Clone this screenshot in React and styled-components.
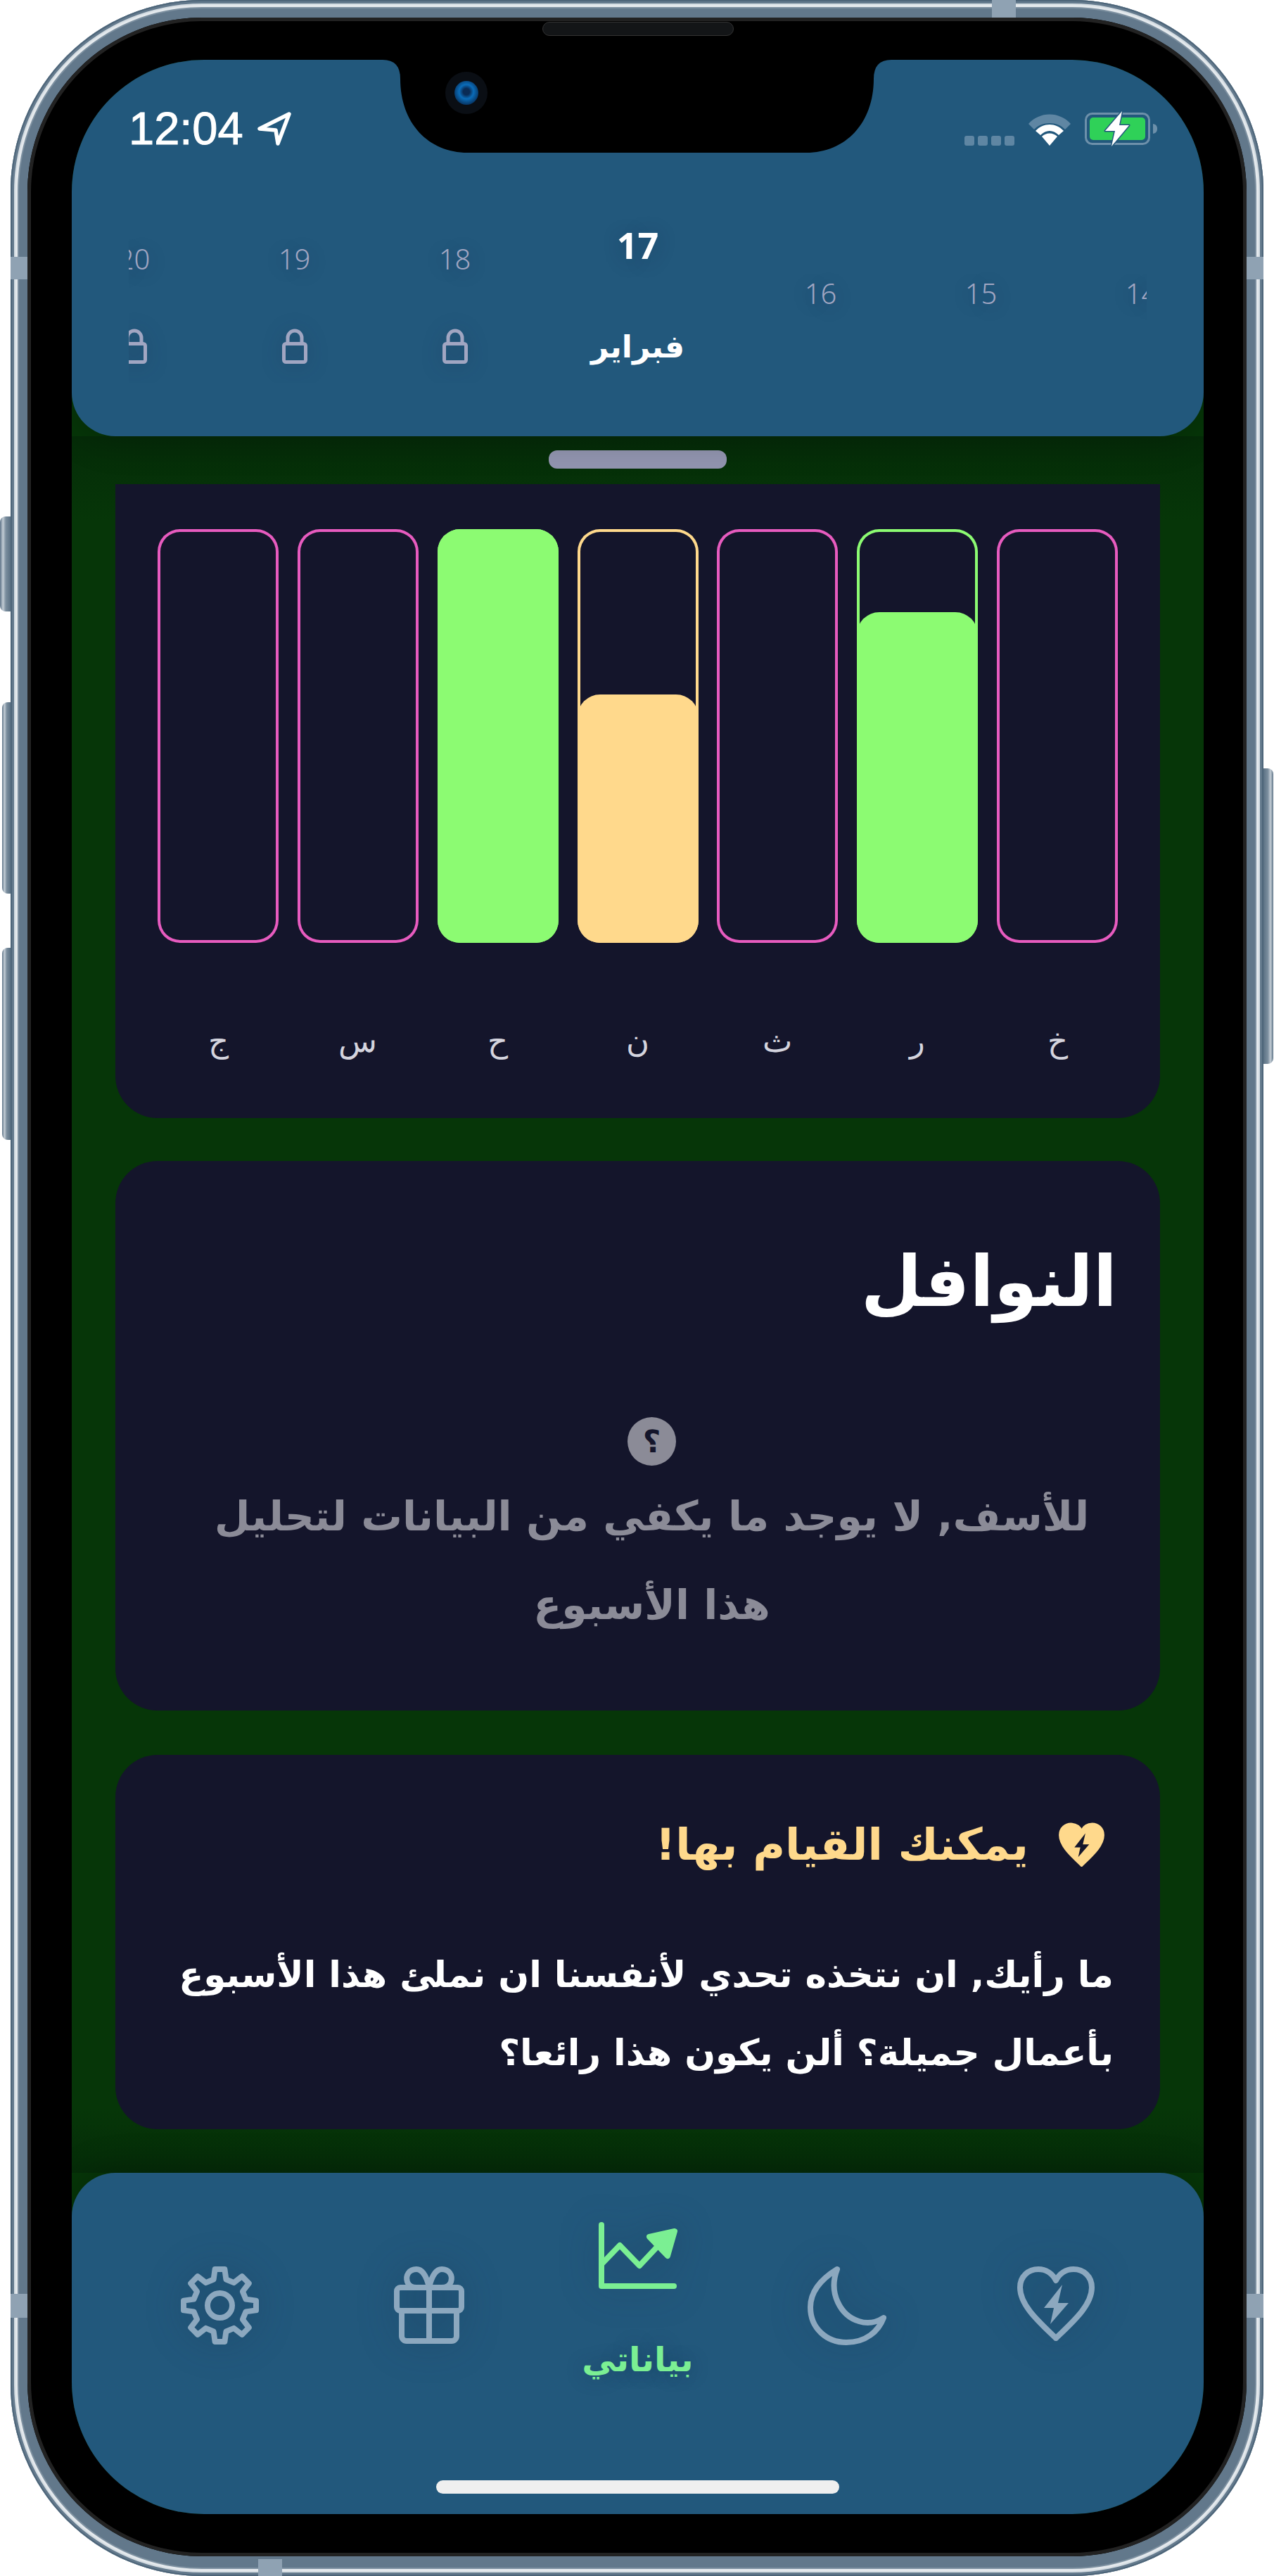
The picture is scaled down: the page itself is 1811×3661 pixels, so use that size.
import React from "react";
import styled, { createGlobalStyle } from "styled-components";

const AR = `"DejaVu Sans", "Noto Sans", sans-serif`;

const Global = createGlobalStyle`
  html, body { margin: 0; padding: 0; background: #fff; }
  #root { width: 1811px; height: 3661px; overflow: hidden; }
  * { box-sizing: border-box; }
`;

const Page = styled.div`
  width: 1811px;
  height: 3661px;
  padding: 0 15px;
  background: #fff;
`;

const Shell = styled.div`
  position: relative;
  width: 1781px;
  height: 3661px;
  border-radius: 272px;
  padding: 25px 24px 28px;
  background: #62788b;
  box-shadow:
    inset 0 0 0 2px #4d6579,
    inset 0 0 0 5px #647a8d,
    inset 0 0 0 7px #d4dce2,
    inset 0 0 0 10px #e4e9ed,
    inset 0 0 0 12px #7d90a0;
`;

const SideButton = styled.div`
  position: absolute;
  top: ${(p) => p.$top}px;
  height: ${(p) => p.$h}px;
  width: ${(p) => p.$w}px;
  ${(p) => (p.$right ? `right: -${p.$w}px;` : `left: -${p.$w}px;`)}
  border-radius: ${(p) => (p.$right ? "0 8px 8px 0" : "8px 0 0 8px")};
  background: linear-gradient(${(p) => (p.$right ? "270deg" : "90deg")}, #5c7286 0, #c3cdd5 28%, #7b8e9e 55%, #5b7184 100%);
`;

const Band = styled.div`
  position: absolute;
  background: #8fa2b3;
  ${(p) => p.$css}
`;

const Bezel = styled.div`
  position: relative;
  width: 100%;
  height: 100%;
  border-radius: 248px;
  background: #000;
  padding: 60px 61px 60px 63px;
  box-shadow: inset 0 0 0 5px #222;
`;

const Speaker = styled.div`
  position: absolute;
  top: 6px;
  left: 732px;
  width: 272px;
  height: 20px;
  border-radius: 10px;
  background: #131517;
  border: 1px solid #333;
`;

const Screen = styled.div`
  position: relative;
  height: 100%;
  width: 100%;
  border-radius: 188px;
  overflow: hidden;
  background: #063608;
  display: flex;
  flex-direction: column;
`;

const NotchShape = styled.svg`
  position: absolute;
  left: 442px;
  top: 0;
  z-index: 3;
`;

const Camera = styled.div`
  position: absolute;
  left: 531px;
  top: 17px;
  z-index: 4;
  width: 60px;
  height: 60px;
  border-radius: 50%;
  background: #0a0e14;
  display: flex;
  align-items: center;
  justify-content: center;
`;

const Lens = styled.div`
  width: 34px;
  height: 34px;
  border-radius: 50%;
  background: radial-gradient(circle at 50% 45%, #0a2b55 0 18%, #0b6cb8 40%, #07325f 75%, #041525 100%);
`;

const Header = styled.header`
  flex: none;
  height: 535px;
  background: #22587c;
  border-radius: 0 0 62px 62px;
  padding: 73px 65px 0 81px;
  box-shadow: 0 6px 50px rgba(0, 0, 0, 0.22);
  position: relative;
  z-index: 2;
  display: flex;
  flex-direction: column;
`;

const StatusBar = styled.div`
  display: flex;
  justify-content: space-between;
  align-items: center;
  height: 50px;
`;

const TimeGroup = styled.div`
  display: flex;
  align-items: center;
  gap: 20px;
`;

const Time = styled.span`
  font: 400 65px/50px "Liberation Sans", sans-serif;
  -webkit-text-stroke: 1px #fff;
  color: #fff;
`;

const StatusRight = styled.div`
  display: flex;
  align-items: flex-end;
  gap: 19px;
`;

const Signal = styled.div`
  display: flex;
  gap: 5px;
  margin-bottom: 1px;
`;

const SignalDot = styled.i`
  width: 14px;
  height: 14px;
  border-radius: 3px;
  background: #5f86a3;
`;

const DayStrip = styled.div`
  width: 1447px;
  margin: 97px 0 0 0;
  overflow: hidden;
  display: flex;
  justify-content: center;
`;

const Day = styled.div`
  flex: none;
  width: ${(p) => (p.$active ? 292 : 228)}px;
  height: 240px;
  display: flex;
  flex-direction: column;
  align-items: center;
  padding-top: ${(p) => (p.$active ? 9 : p.$past ? 86 : 37)}px;
  gap: ${(p) => (p.$active ? 79 : 70)}px;
`;

const DayNumber = styled.span`
  font-family: "Noto Sans", sans-serif;
  font-size: ${(p) => (p.$active ? 52 : 40)}px;
  font-weight: ${(p) => (p.$active ? 700 : 300)};
  line-height: ${(p) => (p.$active ? 68 : 52)}px;
  color: ${(p) => (p.$active ? "#fff" : "#a1a6c2")};
  text-shadow: 0 4px 28px rgba(20, 30, 60, 0.3);
`;

const Month = styled.span`
  font: 700 44px/64px ${AR};
  color: #fff;
  direction: rtl;
`;

const Lock = styled.svg`
  display: block;
  margin-top: 3px;
  filter: drop-shadow(0 4px 14px rgba(20, 30, 60, 0.3));
`;

const Scroll = styled.main`
  flex: 1;
  min-height: 0;
  overflow: hidden;
  padding: 20px 62px 0;
  display: flex;
  flex-direction: column;
  background: linear-gradient(180deg, #052c08 0, #063608 120px, #063608 calc(100% - 90px), #052c08 100%);
`;

const Handle = styled.div`
  flex: none;
  width: 253px;
  height: 26px;
  margin: 0 auto 22px;
  border-radius: 12px;
  background: #9295b0;
`;

const Card = styled.section`
  flex: none;
  background: #14152b;
  border-radius: ${(p) => (p.$cut ? "0 0 60px 60px" : "60px")};
  height: ${(p) => p.$h}px;
  margin-bottom: ${(p) => p.$mb || 0}px;
`;

const ChartCard = styled(Card)`
  padding: 64px 60px 0;
  direction: rtl;
`;

const Bars = styled.div`
  display: grid;
  grid-template-columns: repeat(7, 172px);
  justify-content: space-between;
`;

const Bar = styled.div`
  height: 588px;
  border-radius: 32px;
  box-shadow: inset 0 0 0 4px ${(p) => p.$color};
  display: flex;
  align-items: flex-end;
`;

const Fill = styled.div`
  width: 100%;
  background: ${(p) => p.$color};
  border-radius: 32px;
`;

const Labels = styled.div`
  display: grid;
  grid-template-columns: repeat(7, 172px);
  justify-content: space-between;
  margin-top: 110px;
`;

const DayLabel = styled.span`
  font: 300 45px/60px ${AR};
  color: #d4d4de;
  text-align: center;
`;

const WindowCard = styled(Card)`
  padding: 112px 61px 0 60px;
  display: flex;
  flex-direction: column;
  direction: rtl;
`;

const Title = styled.h2`
  margin: 0;
  font: 700 100px/120px ${AR};
  color: #fff;
`;

const Empty = styled.div`
  display: flex;
  flex-direction: column;
  align-items: center;
  margin: 132px 12px 0 53px;
`;

const QuestionBadge = styled.div`
  width: 69px;
  height: 69px;
  border-radius: 50%;
  background: #8b8b97;
  display: flex;
  align-items: center;
  justify-content: center;
  color: #14152b;
  font: 700 44px/69px ${AR};
  margin-bottom: 9px;
`;

const EmptyText = styled.p`
  margin: 0;
  font: 700 58.5px/126px ${AR};
  color: #8b8b97;
  text-align: center;
  white-space: nowrap;
`;

const TipCard = styled(Card)`
  padding: 96px 77px 0 60px;
  direction: rtl;
`;

const TipHead = styled.div`
  display: flex;
  align-items: center;
  gap: 41px;
  height: 63px;
`;

const TipTitle = styled.h3`
  margin: 0;
  font: 700 62.5px/63px ${AR};
  color: #ffd98c;
`;

const TipText = styled.p`
  margin: 98px -11px 0 0;
  font: 700 51.5px/111px ${AR};
  color: #fff;
  white-space: nowrap;
`;

const TabBar = styled.nav`
  position: relative;
  flex: none;
  height: 485px;
  background: #22587c;
  border-radius: 62px 62px 0 0;
  padding-top: 70px;
  display: grid;
  grid-template-columns: repeat(5, 297px);
  justify-content: center;
  box-shadow: 0 -6px 50px rgba(0, 0, 0, 0.22);
`;

const Tab = styled.div`
  display: flex;
  flex-direction: column;
  align-items: center;
  justify-content: flex-start;
  padding-top: ${(p) => (p.$active ? 0 : 63)}px;
`;

const TabIcon = styled.svg`
  display: block;
  overflow: visible;
  fill: none;
  stroke: ${(p) => (p.$active ? "#7bef93" : "#8ca8bf")};
  stroke-width: 8;
  stroke-linecap: round;
  stroke-linejoin: round;
  filter: drop-shadow(0 0 26px rgba(20, 40, 70, 0.35));
`;

const TabLabel = styled.span`
  margin-top: 70px;
  font: 700 48px/60px ${AR};
  color: #7bef93;
  direction: rtl;
  text-shadow: 0 0 26px rgba(20, 40, 70, 0.35);
`;

const HomeIndicator = styled.div`
  position: absolute;
  left: 518px;
  bottom: 29px;
  width: 573px;
  height: 19px;
  border-radius: 10px;
  background: #efefef;
`;

function gearPath(cx, cy, outer, inner, teeth) {
  const step = (Math.PI * 2) / teeth;
  const pts = [];
  for (let i = 0; i < teeth; i++) {
    const a = i * step - Math.PI / 2;
    const hw = step * 0.17;
    const sw = step * 0.3;
    pts.push([a - sw, inner], [a - hw, outer], [a + hw, outer], [a + sw, inner]);
  }
  const xy = ([a, r]) => `${(cx + r * Math.cos(a)).toFixed(1)} ${(cy + r * Math.sin(a)).toFixed(1)}`;
  return "M" + pts.map(xy).join(" L") + " Z";
}

const Gear = () => (
  <TabIcon width="111" height="111" viewBox="0 0 111 111">
    <path d={gearPath(55.5, 55.5, 52, 38, 8)} />
    <circle cx="55.5" cy="55.5" r="17.5" />
  </TabIcon>
);

const Gift = () => (
  <TabIcon width="100" height="110" viewBox="0 0 100 110">
    <rect x="4" y="30" width="92" height="33" rx="5" />
    <path d="M11 63 V99 a7 7 0 0 0 7 7 H82 a7 7 0 0 0 7-7 V63" />
    <path d="M50 30 V106" />
    <path d="M50 30 C46 12 39 4 32 4 C22 4 16 12 19 22 C21 28 26 30 32 30" />
    <path d="M50 30 C54 12 61 4 68 4 C78 4 84 12 81 22 C79 28 74 30 68 30" />
  </TabIcon>
);

const ChartUp = () => (
  <TabIcon $active width="111" height="95" viewBox="0 0 111 95">
    <path d="M4 4 V91 H107" />
    <path d="M4 60 L30 33 L58 62 L88 30" />
    <path d="M108 13 L72 21 L98 48 Z" fill="#7bef93" />
  </TabIcon>
);

const Moon = () => (
  <TabIcon width="110" height="111" viewBox="0 0 110 111">
    <path d="M41 4 C15 20 3 38 3 58 C3 88 26 108 54 108 C82 108 100 92 107 73 C96 80 84 82 72 78 C46 70 28 38 41 4 Z" />
  </TabIcon>
);

const HEART = "M55 102 C30 78 4 55 4 30 C4 14 16 4 30 4 C41 4 50 10 55 20 C60 10 69 4 80 4 C94 4 106 14 106 30 C106 55 80 78 55 102 Z";
const BOLT = "M64 26 L38 59 L52 59 L47 82 L73 52 L58 52 Z";

const HeartBolt = () => (
  <TabIcon width="110" height="105" viewBox="0 0 110 105">
    <path d={HEART} />
    <path d={BOLT} fill="#8ca8bf" stroke="none" />
  </TabIcon>
);

const LockIcon = () => (
  <Lock width="36" height="50" viewBox="0 0 36 50" fill="none" stroke="#a1a6c2" strokeWidth="5">
    <rect x="2.5" y="21.5" width="31" height="26" rx="3" />
    <path d="M8 21 V13 a10 10 0 0 1 20 0 V21" />
  </Lock>
);

const days = [
  { n: "20" }, { n: "19" }, { n: "18" },
  { n: "17", active: true },
  { n: "16", past: true }, { n: "15", past: true }, { n: "14", past: true },
];

const bars = [
  { c: "#e75bbf" },
  { c: "#8cfb72", f: 80 },
  { c: "#e75bbf" },
  { c: "#ffd98c", f: 60 },
  { c: "#8cfb72", f: 100 },
  { c: "#e75bbf" },
  { c: "#e75bbf" },
];

const letters = ["خ", "ر", "ث", "ن", "ح", "س", "ج"];

export default function App() {
  return (
    <Page>
      <Global />
      <Shell>
        <SideButton $top={734} $h={135} $w={15} />
        <SideButton $top={998} $h={272} $w={12} />
        <SideButton $top={1347} $h={273} $w={12} />
        <SideButton $right $top={1092} $h={420} $w={14} />
        <Band $css="left:0;top:365px;width:24px;height:32px;" />
        <Band $css="right:0;top:365px;width:24px;height:32px;" />
        <Band $css="left:0;top:3260px;width:24px;height:34px;" />
        <Band $css="right:0;top:3260px;width:24px;height:34px;" />
        <Band $css="left:352px;bottom:0;width:34px;height:24px;" />
        <Band $css="left:1395px;top:0;width:34px;height:25px;" />
        <Bezel>
          <Speaker />
          <Screen>
            <NotchShape width="723" height="132" viewBox="0 0 723 132">
              <path d="M0 0 Q25 0 25 27 C25 90 65 132 121 132 H602 C658 132 698 90 698 27 Q698 0 723 0 Z" fill="#000" />
            </NotchShape>
            <Camera><Lens /></Camera>
            <Header>
              <StatusBar>
                <TimeGroup>
                  <Time>12:04</Time>
                  <svg width="48" height="48" viewBox="0 0 48 48" fill="none" stroke="#fff" strokeWidth="5.5" strokeLinejoin="round">
                    <path d="M45 3 L3 24 L26 26 L29 45 Z" />
                  </svg>
                </TimeGroup>
                <StatusRight>
                  <Signal>
                    <SignalDot /><SignalDot /><SignalDot /><SignalDot />
                  </Signal>
                  <svg width="62" height="47" viewBox="0 0 62 47">
                    <path d="M1 15 C17 -3 45 -3 61 15 L53 23 C42 11 20 11 9 23 Z" fill="#5f86a3" />
                    <path d="M11 25 C22 13 40 13 51 25 L44 31 C36 23 26 23 18 31 Z" fill="#fff" />
                    <path d="M20 33 C26 27 36 27 42 33 L31 46 Z" fill="#fff" />
                  </svg>
                  <svg width="104" height="50" viewBox="0 0 104 50">
                    <rect x="1.5" y="3.5" width="90" height="43" rx="9" fill="none" stroke="#6d90aa" strokeWidth="3" />
                    <rect x="7" y="9" width="79" height="32" rx="5" fill="#2fd158" />
                    <path d="M97 18 C102 19 103 22 103 25 C103 28 102 31 97 32 Z" fill="#6d90aa" />
                    <path d="M53 0 L29 28 L43 28 L38 50 L63 20 L49 20 Z" fill="#fff" stroke="#22587c" strokeWidth="3" strokeLinejoin="round" paintOrder="stroke" />
                  </svg>
                </StatusRight>
              </StatusBar>
              <DayStrip>
                {days.map((d) => (
                  <Day key={d.n} $active={d.active} $past={d.past}>
                    <DayNumber $active={d.active}>{d.n}</DayNumber>
                    {d.active ? <Month>فبراير</Month> : d.past ? null : <LockIcon />}
                  </Day>
                ))}
              </DayStrip>
            </Header>
            <Scroll>
              <Handle />
              <ChartCard $cut $h={901} $mb={61}>
                <Bars>
                  {bars.map((b, i) => (
                    <Bar key={i} $color={b.c}>
                      {b.f ? <Fill $color={b.c} style={{ height: `${b.f}%` }} /> : null}
                    </Bar>
                  ))}
                </Bars>
                <Labels>
                  {letters.map((l) => (
                    <DayLabel key={l}>{l}</DayLabel>
                  ))}
                </Labels>
              </ChartCard>
              <WindowCard $h={781} $mb={63}>
                <Title>النوافل</Title>
                <Empty>
                  <QuestionBadge>؟</QuestionBadge>
                  <EmptyText>
                    للأسف, لا يوجد ما يكفي من البيانات لتحليل
                    <br />
                    هذا الأسبوع
                  </EmptyText>
                </Empty>
              </WindowCard>
              <TipCard $h={532}>
                <TipHead>
                  <svg width="69" height="63" viewBox="0 0 110 105">
                    <path d={HEART} fill="#ffd98c" stroke="#ffd98c" strokeWidth="6" />
                    <path d={BOLT} fill="#14152b" />
                  </svg>
                  <TipTitle>يمكنك القيام بها!</TipTitle>
                </TipHead>
                <TipText>
                  ما رأيك, ان نتخذه تحدي لأنفسنا ان نملئ هذا الأسبوع
                  <br />
                  بأعمال جميلة؟ ألن يكون هذا رائعا؟
                </TipText>
              </TipCard>
            </Scroll>
            <TabBar>
              <Tab><Gear /></Tab>
              <Tab><Gift /></Tab>
              <Tab $active>
                <ChartUp />
                <TabLabel>بياناتي</TabLabel>
              </Tab>
              <Tab><Moon /></Tab>
              <Tab><HeartBolt /></Tab>
              <HomeIndicator />
            </TabBar>
          </Screen>
        </Bezel>
      </Shell>
    </Page>
  );
}
